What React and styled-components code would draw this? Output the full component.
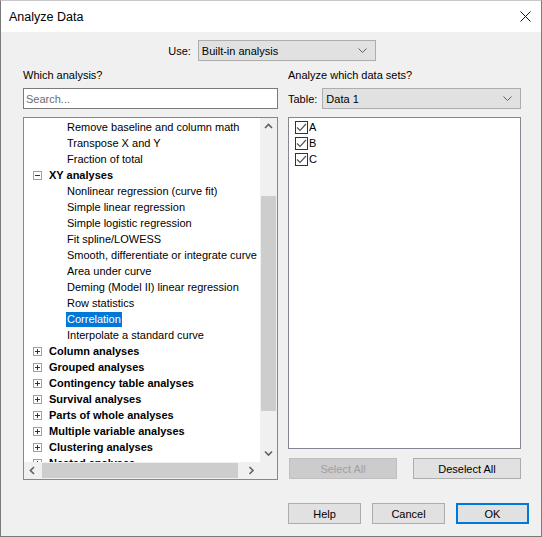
import React from "react";
import styled, { createGlobalStyle } from "styled-components";

const GlobalStyle = createGlobalStyle`
  html, body {
    margin: 0;
    padding: 0;
    background: #f0f0f0;
  }
  * {
    box-sizing: border-box;
  }
`;

const UI_FONT = `"Liberation Sans", Arial, sans-serif`;

// --- Window chrome ---

const Window = styled.div`
  width: 542px;
  height: 537px;
  border: 1px solid #7a7a7a;
  border-top-color: #c8c8c8;
  background: #f0f0f0;
  display: flex;
  flex-direction: column;
  font-family: ${UI_FONT};
  color: #000;
`;

const TitleBar = styled.div`
  height: 31px;
  flex: none;
  background: #fff;
  display: flex;
  align-items: center;
  justify-content: space-between;
  padding: 0 10px 0 8px;
  font-size: 12.5px;
`;

const CloseIcon = styled.svg`
  width: 11px;
  height: 11px;
  display: block;
`;

const Body = styled.div`
  flex: 1;
  display: flex;
  flex-direction: column;
  padding: 8px 12px 0 22px;
  font-size: 11px;
`;

// --- Top "Use:" row ---

const UseRow = styled.div`
  display: flex;
  align-items: center;
  justify-content: center;
  gap: 7px;
  width: 498px;
  height: 21px;
`;

const Label = styled.span`
  font-size: 11px;
  white-space: nowrap;
`;

const SelectBox = styled.div`
  height: 21px;
  width: ${(p) => (p.$width ? `${p.$width}px` : "auto")};
  flex: ${(p) => (p.$grow ? 1 : "none")};
  border: 1px solid #adadad;
  background: #e1e1e1;
  display: flex;
  align-items: center;
  justify-content: space-between;
  padding: 0 8px 0 3px;
  font-size: 11px;
`;

const Chevron = styled.svg`
  width: 9px;
  height: 5px;
  display: block;
`;

// --- Columns ---

const Columns = styled.div`
  display: grid;
  grid-template-columns: 255px 233px;
  column-gap: 10px;
  margin-top: 7px;
`;

const Column = styled.div`
  display: flex;
  flex-direction: column;
`;

const Heading = styled.div`
  height: 14px;
  line-height: 14px;
  font-size: 11px;
`;

const SearchInput = styled.div`
  margin-top: 6px;
  height: 21px;
  border: 1px solid #7a7a7a;
  background: #fff;
  color: #6d6d6d;
  display: flex;
  align-items: center;
  padding-left: 2px;
  font-size: 11px;
`;

const TableRow = styled.div`
  margin-top: 6px;
  height: 21px;
  display: flex;
  align-items: center;
  gap: 5px;
`;

// --- Tree ---

const TreeBox = styled.div`
  margin-top: 8px;
  height: 363px;
  border: 1px solid #828790;
  background: #fff;
  display: grid;
  grid-template-columns: 1fr 17px;
  grid-template-rows: 1fr 17px;
`;

const TreeContent = styled.div`
  overflow: hidden;
  padding-top: 1px;
`;

const TreeRow = styled.div`
  height: 16px;
  display: flex;
  align-items: center;
  padding-left: ${(p) => (p.$child ? 43 : 9)}px;
  white-space: nowrap;
  font-size: 11px;
  font-weight: ${(p) => (p.$group ? 700 : 400)};
`;

const Expander = styled.span`
  width: 9px;
  height: 9px;
  border: 1px solid #a0a0a0;
  margin-right: 7px;
  position: relative;
  flex: none;

  &::before,
  &::after {
    content: "";
    position: absolute;
    background: #333;
  }
  &::before {
    left: 1px;
    top: 3px;
    width: 5px;
    height: 1px;
  }
  &::after {
    display: ${(p) => (p.$open ? "none" : "block")};
    left: 3px;
    top: 1px;
    width: 1px;
    height: 5px;
  }
`;

const ItemText = styled.span`
  padding: 1px 1px 2px 1px;
  margin-left: -1px;
  background: ${(p) => (p.$selected ? "#0078d7" : "transparent")};
  color: ${(p) => (p.$selected ? "#fff" : "#000")};
`;

const VScroll = styled.div`
  background: #f0f0f0;
  display: flex;
  flex-direction: column;
`;

const HScroll = styled.div`
  background: #f0f0f0;
  display: flex;
  align-items: center;
`;

const ScrollArrow = styled.div`
  width: 17px;
  height: 17px;
  flex: none;
  display: flex;
  align-items: center;
  justify-content: center;
`;

const VTrack = styled.div`
  flex: 1;
  padding-top: 61px;
`;

const VThumb = styled.div`
  height: 215px;
  margin: 0 1px;
  background: #cdcdcd;
`;

const HTrack = styled.div`
  flex: 1;
  height: 100%;
  padding: 1px 0;
  display: flex;
  align-items: stretch;
`;

const HThumb = styled.div`
  width: 196px;
  margin-left: 1px;
  background: #cdcdcd;
`;

const Corner = styled.div`
  background: #f0f0f0;
`;

// --- Data sets list ---

const DataBox = styled.div`
  margin-top: 8px;
  height: 332px;
  border: 1px solid #828790;
  background: #fff;
  padding: 1px 0 0 6px;
`;

const CheckRow = styled.div`
  height: 16px;
  display: flex;
  align-items: center;
  font-size: 11px;
`;

const CheckBox = styled.span`
  width: 13px;
  height: 13px;
  border: 1px solid #333;
  background: #fff;
  display: flex;
  align-items: center;
  justify-content: center;
  margin-right: 1px;
`;

const ButtonRow = styled.div`
  margin-top: 9px;
  display: flex;
  justify-content: space-between;
  padding-left: 1px;
`;

const Button = styled.div`
  height: 21px;
  width: ${(p) => p.$width}px;
  display: flex;
  align-items: center;
  justify-content: center;
  font-size: 11px;
  background: ${(p) => (p.$disabled ? "#cccccc" : "#e1e1e1")};
  color: ${(p) => (p.$disabled ? "#a0a0a0" : "#000")};
  border: ${(p) =>
    p.$default ? "2px solid #0078d7" : `1px solid ${p.$disabled ? "#bfbfbf" : "#adadad"}`};
`;

const Footer = styled.div`
  margin-top: 23px;
  display: flex;
  justify-content: flex-end;
  gap: 11px;
`;

// --- Data ---

const TREE = [
  { label: "Remove baseline and column math" },
  { label: "Transpose X and Y" },
  { label: "Fraction of total" },
  { label: "XY analyses", group: true, open: true },
  { label: "Nonlinear regression (curve fit)" },
  { label: "Simple linear regression" },
  { label: "Simple logistic regression" },
  { label: "Fit spline/LOWESS" },
  { label: "Smooth, differentiate or integrate curve" },
  { label: "Area under curve" },
  { label: "Deming (Model II) linear regression" },
  { label: "Row statistics" },
  { label: "Correlation", selected: true },
  { label: "Interpolate a standard curve" },
  { label: "Column analyses", group: true },
  { label: "Grouped analyses", group: true },
  { label: "Contingency table analyses", group: true },
  { label: "Survival analyses", group: true },
  { label: "Parts of whole analyses", group: true },
  { label: "Multiple variable analyses", group: true },
  { label: "Clustering analyses", group: true },
  { label: "Nested analyses", group: true },
];

const DATA_SETS = ["A", "B", "C"];

function DropChevron() {
  return (
    <Chevron viewBox="0 0 9 5">
      <polyline points="0.5,0.5 4.5,4.5 8.5,0.5" fill="none" stroke="#606060" strokeWidth="1" />
    </Chevron>
  );
}

function Arrow({ dir }) {
  const pts = {
    up: "1,5 4.5,1.5 8,5",
    down: "1,1.5 4.5,5 8,1.5",
    left: "5,1 1.5,4.5 5,8",
    right: "1.5,1 5,4.5 1.5,8",
  }[dir];
  const vertical = dir === "up" || dir === "down";
  return (
    <svg width={vertical ? 9 : 7} height={vertical ? 7 : 9} viewBox={vertical ? "0 0 9 7" : "0 0 7 9"}>
      <polyline points={pts} fill="none" stroke="#606060" strokeWidth="1.6" />
    </svg>
  );
}

export default function App() {
  return (
    <>
      <GlobalStyle />
      <Window>
        <TitleBar>
          <span>Analyze Data</span>
          <CloseIcon viewBox="0 0 11 11">
            <path d="M0.5 0.5 L10.5 10.5 M10.5 0.5 L0.5 10.5" stroke="#111" strokeWidth="1" />
          </CloseIcon>
        </TitleBar>

        <Body>
          <UseRow>
            <Label>Use:</Label>
            <SelectBox $width={178}>
              <span>Built-in analysis</span>
              <DropChevron />
            </SelectBox>
          </UseRow>

          <Columns>
            <Column>
              <Heading>Which analysis?</Heading>
              <SearchInput>Search...</SearchInput>
              <TreeBox>
                <TreeContent>
                  {TREE.map((item) =>
                    item.group ? (
                      <TreeRow key={item.label} $group>
                        <Expander $open={item.open} />
                        <span>{item.label}</span>
                      </TreeRow>
                    ) : (
                      <TreeRow key={item.label} $child>
                        <ItemText $selected={item.selected}>{item.label}</ItemText>
                      </TreeRow>
                    )
                  )}
                </TreeContent>
                <VScroll>
                  <ScrollArrow>
                    <Arrow dir="up" />
                  </ScrollArrow>
                  <VTrack>
                    <VThumb />
                  </VTrack>
                  <ScrollArrow>
                    <Arrow dir="down" />
                  </ScrollArrow>
                </VScroll>
                <HScroll>
                  <ScrollArrow>
                    <Arrow dir="left" />
                  </ScrollArrow>
                  <HTrack>
                    <HThumb />
                  </HTrack>
                  <ScrollArrow>
                    <Arrow dir="right" />
                  </ScrollArrow>
                </HScroll>
                <Corner />
              </TreeBox>
            </Column>

            <Column>
              <Heading>Analyze which data sets?</Heading>
              <TableRow>
                <Label>Table:</Label>
                <SelectBox $grow>
                  <span>Data 1</span>
                  <DropChevron />
                </SelectBox>
              </TableRow>
              <DataBox>
                {DATA_SETS.map((name) => (
                  <CheckRow key={name}>
                    <CheckBox>
                      <svg width="11" height="9" viewBox="0 0 11 9">
                        <polyline points="1,4.5 4,7.5 10,1" fill="none" stroke="#555" strokeWidth="1.2" />
                      </svg>
                    </CheckBox>
                    <span>{name}</span>
                  </CheckRow>
                ))}
              </DataBox>
              <ButtonRow>
                <Button $width={108} $disabled>
                  Select All
                </Button>
                <Button $width={108}>Deselect All</Button>
              </ButtonRow>
            </Column>
          </Columns>

          <Footer>
            <Button $width={73}>Help</Button>
            <Button $width={73}>Cancel</Button>
            <Button $width={73} $default>
              OK
            </Button>
          </Footer>
        </Body>
      </Window>
    </>
  );
}
